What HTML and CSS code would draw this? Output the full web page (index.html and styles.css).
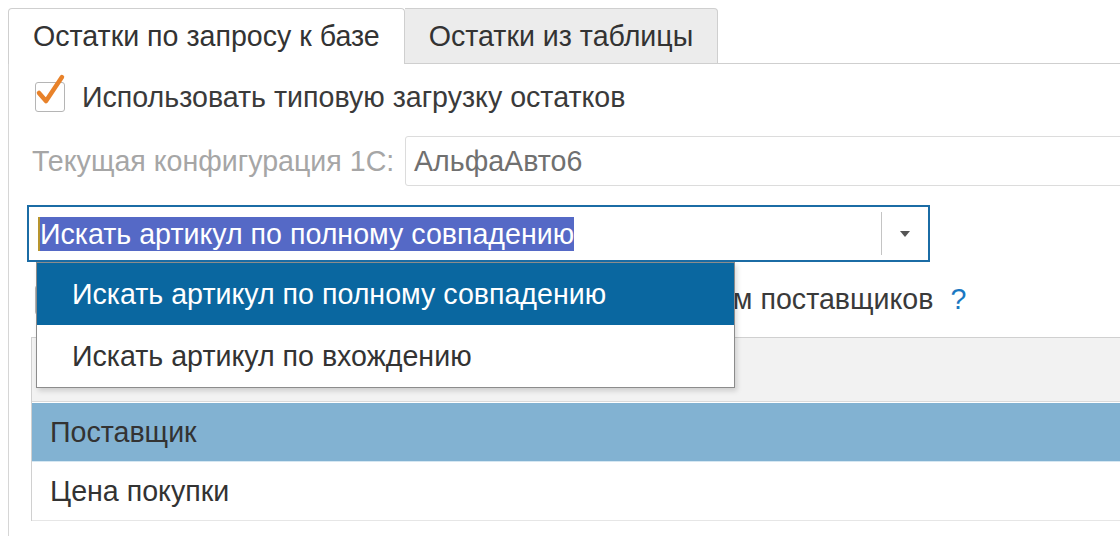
FILE: index.html
```html
<!DOCTYPE html>
<html lang="ru">
<head>
    <meta charset="UTF-8">
    <title>Остатки</title>
    <link rel="stylesheet" href="styles.css">
</head>
<body>
<div class="page">
    <div class="tabs">
        <div class="tab active">Остатки по запросу к базе</div>
        <div class="tab">Остатки из таблицы</div>
        <div class="tab-fill"></div>
    </div>

    <div class="panel">
        <label class="check-row">
            <span class="checkbox">
                <svg width="34" height="40" viewBox="0 0 34 40">
                    <path d="M5 23 L12 31 L28 7" fill="none" stroke="#e8822a" stroke-width="4.5" stroke-linecap="round" stroke-linejoin="round"/>
                </svg>
            </span>
            <span>Использовать типовую загрузку остатков</span>
        </label>

        <div class="field-row">
            <div class="field-label">Текущая конфигурация 1С:</div>
            <div class="field-input">АльфаАвто6</div>
        </div>

        <div class="combo-wrap">
            <div class="combo">
                <div class="combo-value"><span class="caret"></span><span class="selection">Искать артикул по полному совпадению</span></div>
                <div class="combo-button"><span class="triangle"></span></div>
            </div>
            <div class="popup">
                <div class="popup-item selected">Искать артикул по полному совпадению</div>
                <div class="popup-item">Искать артикул по вхождению</div>
            </div>
        </div>

        <div class="check-row hidden-row">
            <span class="checkbox"></span>
            <span>Фильтровать остатки только по закупочным ценам поставщиков</span>
            <span class="help">?</span>
        </div>

        <div class="table">
            <div class="table-head"></div>
            <div class="table-row current">Поставщик</div>
            <div class="table-row">Цена покупки</div>
        </div>
    </div>
</div>
</body>
</html>
```

FILE: styles.css
```css
body {
    margin: 0;
    background: #fff;
    font-family: 'Liberation Sans', Arial, sans-serif;
    font-size: 28.6px;
    color: #3a3a3a;
    overflow: hidden;
}

.page {
    width: 1150px;
    padding-top: 8px;
}

.tabs {
    display: flex;
    height: 56px;
    padding-left: 8px;
}

.tab {
    display: flex;
    align-items: center;
    padding: 0 24px;
    background: #ececec;
    border: 1px solid #cfcfcf;
    border-left: none;
    border-radius: 0 4px 0 0;
    color: #333;
    white-space: nowrap;
}

.tab.active {
    background: #fff;
    border-left: 1px solid #cfcfcf;
    border-bottom: none;
    border-radius: 4px 4px 0 0;
}

.tab-fill {
    flex: 1;
    border-bottom: 1px solid #cfcfcf;
}

.panel {
    margin-left: 8px;
    border-left: 1px solid #d6d6d6;
    padding-left: 18px;
    height: 480px;
}

.check-row {
    display: flex;
    align-items: center;
    height: 66px;
    padding-left: 8px;
    gap: 17px;
    white-space: nowrap;
}

.checkbox {
    position: relative;
    width: 28px;
    height: 28px;
    border: 1px solid #b5b5b5;
    border-radius: 3px;
    flex-shrink: 0;
}

.checkbox svg {
    position: absolute;
    left: -2px;
    top: -13px;
}

.field-row {
    display: flex;
    align-items: center;
    height: 50px;
    margin-top: 6px;
}

.field-label {
    width: 373px;
    padding-left: 5px;
    color: #a6a6a6;
    white-space: nowrap;
}

.field-input {
    flex: 1;
    height: 48px;
    display: flex;
    align-items: center;
    padding-left: 8px;
    border: 1px solid #dcdcdc;
    border-radius: 3px;
    color: #707070;
}

.combo-wrap {
    position: relative;
    width: 903px;
    margin-top: 19px;
}

.combo {
    display: flex;
    height: 53px;
    border: 2px solid #1b6ca5;
}

.combo-value {
    flex: 1;
    display: flex;
    align-items: center;
    padding-left: 9px;
    white-space: nowrap;
}

.caret {
    width: 2px;
    height: 34px;
    background: #b8952e;
}

.selection {
    background: #5569c6;
    color: #fff;
    line-height: 34px;
}

.combo-button {
    width: 46px;
    margin: 5px 0;
    border-left: 1px solid #c4c4c4;
    display: flex;
    align-items: center;
    justify-content: center;
}

.triangle {
    width: 0;
    height: 0;
    border-left: 5px solid transparent;
    border-right: 5px solid transparent;
    border-top: 6px solid #555;
}

.popup {
    position: absolute;
    left: 9px;
    top: 100%;
    width: 697px;
    background: #fff;
    border: 1px solid #8c8c8c;
    box-shadow: 2px 3px 5px rgba(0, 0, 0, 0.15);
    z-index: 2;
}

.popup-item {
    height: 62px;
    display: flex;
    align-items: center;
    padding-left: 35px;
    color: #333;
    white-space: nowrap;
}

.popup-item.selected {
    background: #0a67a0;
    color: #fff;
}

.hidden-row {
    height: 75px;
}

.help {
    color: #1a78c2;
}

.table {
    margin-left: 4px;
    border-left: 1px solid #d0d0d0;
    border-top: 1px solid #d0d0d0;
}

.table-head {
    height: 63px;
    background: #f2f2f2;
    border-bottom: 1px solid #dadada;
}

.table-row {
    height: 58px;
    display: flex;
    align-items: center;
    padding-left: 18px;
    border-bottom: 1px solid #e6e6e6;
    color: #333;
}

.table-row.current {
    background: #82b2d2;
    border-top: 1px solid #fff;
    border-bottom: 1px solid #d5e7f2;
}
```
